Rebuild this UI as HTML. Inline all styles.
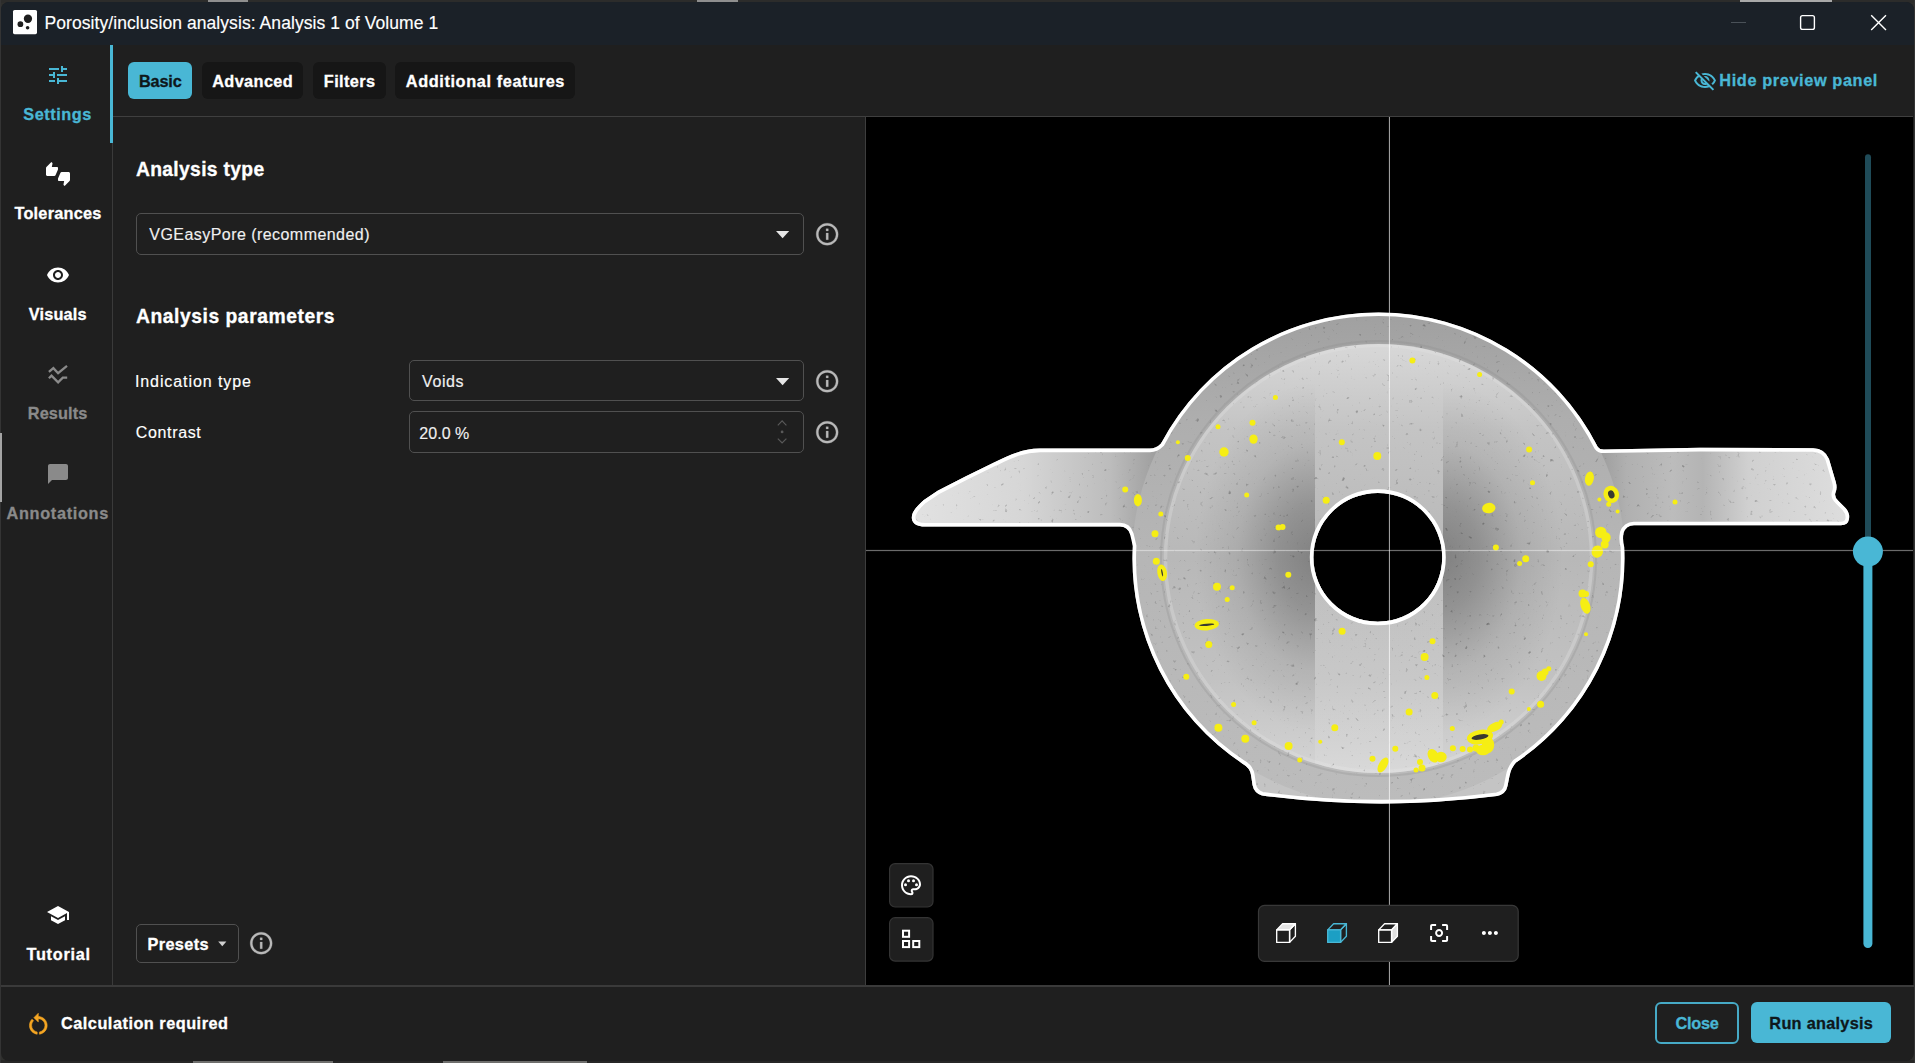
<!DOCTYPE html>
<html lang="en">
<head>
<meta charset="utf-8">
<title>Porosity/inclusion analysis</title>
<style>
*{box-sizing:border-box;margin:0;padding:0}
html,body{width:1915px;height:1063px;overflow:hidden;background:#2f2f2d;font-family:"Liberation Sans",sans-serif;color:#fff}
#win{position:absolute;left:1px;top:2px;width:1912.5px;height:1059px;background:#1f1f1f;border-radius:8px;overflow:hidden}
#pg{position:absolute;left:-1px;top:-2px;width:1915px;height:1063px}
.abs{position:absolute}
.t{position:absolute;white-space:nowrap;line-height:1;-webkit-text-stroke:0.15px currentColor}
.b{font-weight:bold;-webkit-text-stroke:0.3px currentColor}
.tab{position:absolute;top:62px;height:37px;border-radius:6px;background:#161616}
.field{position:absolute;border:1.4px solid #505050;border-radius:5px;background:#1f1f1f}
svg{position:absolute;overflow:visible}
</style>
</head>
<body>
<div class="abs" style="left:0;top:0;width:1915px;height:3px;background:#2c2c2b"></div>
<div class="abs" style="left:1740px;top:0;width:92px;height:1.7px;background:#a9a9a9"></div>
<div class="abs" style="left:208px;top:0;width:40px;height:1.6px;background:#8f8f8f"></div>
<div class="abs" style="left:697px;top:0;width:41px;height:1.6px;background:#8f8f8f"></div>
<div class="abs" style="left:0;top:1060px;width:1915px;height:3px;background:#272726"></div>
<div class="abs" style="left:193px;top:1060px;width:140px;height:3px;background:#6e6e6c"></div>
<div class="abs" style="left:443px;top:1060px;width:144px;height:3px;background:#6e6e6c"></div>
<div class="abs" style="left:1913.5px;top:0;width:1.5px;height:1063px;background:#343434"></div>
<div class="abs" style="left:0;top:0;width:1px;height:1063px;background:#343434"></div>
<div class="abs" style="left:0;top:433px;width:1.6px;height:69px;background:#a4a4a4;z-index:5"></div>

<div id="win"><div id="pg">

<div class="abs" style="left:0;top:0;width:1915px;height:44.5px;background:#1b2128"></div>
<div class="abs" style="left:111.6px;top:45px;width:1.4px;height:941px;background:#3a3a3a"></div>
<div class="abs" style="left:110px;top:45px;width:3px;height:98px;background:#49b7d5"></div>
<div class="abs" style="left:113px;top:115.7px;width:1800px;height:1.3px;background:#3f3f3f"></div>
<div class="abs" style="left:864.6px;top:116px;width:1.5px;height:870px;background:#3d3d3d"></div>
<div class="abs" style="left:0;top:985px;width:1915px;height:1.6px;background:#3a3a3a"></div>
<div class="tab" style="left:128px;width:64.2px;background:#49b7d5"></div>
<div class="tab" style="left:202px;width:101.3px"></div>
<div class="tab" style="left:313px;width:72.5px"></div>
<div class="tab" style="left:395px;width:179.8px"></div>
<div class="field" style="left:136px;top:213px;width:668px;height:41.5px"></div>
<div class="field" style="left:409px;top:360.3px;width:395px;height:41.2px"></div>
<div class="field" style="left:409px;top:411.2px;width:395px;height:41.4px"></div>
<div class="field" style="left:136.2px;top:924.3px;width:103px;height:38.3px"></div>
<div class="abs" style="left:1655px;top:1002px;width:84.3px;height:41.5px;border:2px solid #46aac6;border-radius:6px"></div>
<div class="abs" style="left:1751px;top:1002px;width:139.5px;height:41px;background:#49b7d5;border-radius:6px"></div>

<div class="t" id="ttl" style="left:44.56px;top:14.79px;font-size:17.5px;color:#ffffff;letter-spacing:0.071px">Porosity/inclusion analysis: Analysis 1 of Volume 1</div>
<div class="t b" id="s1" style="left:23.24px;top:106.00px;font-size:16.3px;color:#49b7d5;letter-spacing:0.553px">Settings</div>
<div class="t b" id="s2" style="left:14.47px;top:205.10px;font-size:16.3px;color:#ffffff;letter-spacing:0.226px">Tolerances</div>
<div class="t b" id="s3" style="left:28.80px;top:306.00px;font-size:16.3px;color:#ffffff;letter-spacing:0.158px">Visuals</div>
<div class="t b" id="s4" style="left:27.76px;top:405.10px;font-size:16.3px;color:#8a8a8a;letter-spacing:0.132px">Results</div>
<div class="t b" id="s5" style="left:6.53px;top:505.00px;font-size:16.3px;color:#8a8a8a;letter-spacing:0.681px">Annotations</div>
<div class="t b" id="s6" style="left:26.47px;top:946.20px;font-size:16.3px;color:#ffffff;letter-spacing:0.730px">Tutorial</div>
<div class="t b" id="t1" style="left:138.94px;top:73.30px;font-size:16.3px;color:#0e171b;letter-spacing:-0.171px">Basic</div>
<div class="t b" id="t2" style="left:212.20px;top:73.30px;font-size:16.3px;color:#ffffff;letter-spacing:0.389px">Advanced</div>
<div class="t b" id="t3" style="left:323.80px;top:73.30px;font-size:16.3px;color:#ffffff;letter-spacing:0.407px">Filters</div>
<div class="t b" id="t4" style="left:405.81px;top:73.30px;font-size:16.3px;color:#ffffff;letter-spacing:0.618px">Additional features</div>
<div class="t b" id="hp" style="left:1719.30px;top:72.20px;font-size:16.3px;color:#49b7d5;letter-spacing:0.622px">Hide preview panel</div>
<div class="t b" id="h1" style="left:135.98px;top:160.41px;font-size:19.3px;color:#ffffff;letter-spacing:0.324px">Analysis type</div>
<div class="t" id="f1" style="left:149.37px;top:226.76px;font-size:16px;color:#f0f0f0;letter-spacing:0.445px">VGEasyPore (recommended)</div>
<div class="t b" id="h2" style="left:135.98px;top:307.16px;font-size:19.3px;color:#ffffff;letter-spacing:0.546px">Analysis parameters</div>
<div class="t" id="l1" style="left:134.92px;top:374.46px;font-size:16px;color:#ffffff;letter-spacing:0.917px">Indication type</div>
<div class="t" id="f2" style="left:422.10px;top:374.46px;font-size:16px;color:#f0f0f0;letter-spacing:0.565px">Voids</div>
<div class="t" id="l2" style="left:135.78px;top:425.26px;font-size:16px;color:#ffffff;letter-spacing:0.651px">Contrast</div>
<div class="t" id="f3" style="left:419.24px;top:425.56px;font-size:16px;color:#f0f0f0;letter-spacing:0.058px">20.0 %</div>
<div class="t b" id="pr" style="left:147.52px;top:936.10px;font-size:16.3px;color:#ffffff;letter-spacing:0.355px">Presets</div>
<div class="t b" id="cr" style="left:61.03px;top:1015.10px;font-size:16.3px;color:#ffffff;letter-spacing:0.503px">Calculation required</div>
<div class="t b" id="cl" style="left:1675.59px;top:1015.20px;font-size:16.3px;color:#49b7d5;letter-spacing:-0.266px">Close</div>
<div class="t b" id="ra" style="left:1769.35px;top:1015.20px;font-size:16.3px;color:#0e171b;letter-spacing:0.278px">Run analysis</div>
<svg style="left:13px;top:10px" width="24" height="24" viewBox="0 0 24 24"><rect x="0" y="0" width="24" height="24.2" rx="1.6" fill="#fff"/><circle cx="14.95" cy="8.75" r="4.15" fill="#1e1e1e"/><circle cx="7.4" cy="14.2" r="2.85" fill="#1e1e1e"/><circle cx="14.6" cy="17.8" r="1.8" fill="#1e1e1e"/></svg>
<svg style="left:0;top:0" width="1915" height="45" viewBox="0 0 1915 45"><line x1="1731" y1="22.5" x2="1746" y2="22.5" stroke="#4a5158" stroke-width="1.2"/><rect x="1800.6" y="15.6" width="13.8" height="13.8" rx="2" fill="none" stroke="#fff" stroke-width="1.4"/><path d="M1871.2 15.2 L1886 30 M1886 15.2 L1871.2 30" stroke="#fff" stroke-width="1.4" fill="none"/></svg>
<svg style="left:46px;top:63px" width="24" height="24" viewBox="0 0 24 24"><path fill="#49b7d5" d="M3 17v2h6v-2H3zM3 5v2h10V5H3zm10 16v-2h8v-2h-8v-2h-2v6h2zM7 9v2H3v2h4v2h2V9H7zm14 4v-2H11v2h10zm-6-4h2V7h4V5h-4V3h-2v6z"/></svg>
<svg style="left:46px;top:162px" width="24" height="24" viewBox="0 0 24 24"><path fill="#ffffff" d="M12 6c0-.55-.45-1-1-1H5.82l.66-3.18.02-.23c0-.31-.13-.59-.33-.8L5.38 0 .44 4.94C.17 5.21 0 5.59 0 6v6.5c0 .83.67 1.5 1.5 1.5h6.75c.62 0 1.15-.38 1.38-.91l2.26-5.29c.07-.17.11-.36.11-.55V6zm10.5 4h-6.75c-.62 0-1.15.38-1.38.91l-2.26 5.29c-.07.17-.11.36-.11.55V18c0 .55.45 1 1 1h5.18l-.66 3.18-.02.24c0 .31.13.59.33.8l.79.78 4.94-4.94c.27-.27.44-.65.44-1.06v-6.5c0-.83-.67-1.5-1.5-1.5z"/></svg>
<svg style="left:46px;top:262.9px" width="24" height="24" viewBox="0 0 24 24"><path fill="#ffffff" d="M12 4.5C7 4.5 2.73 7.61 1 12c1.73 4.39 6 7.5 11 7.5s9.27-3.11 11-7.5c-1.73-4.39-6-7.5-11-7.5zM12 17c-2.76 0-5-2.24-5-5s2.24-5 5-5 5 2.24 5 5-2.24 5-5 5zm0-8c-1.66 0-3 1.34-3 3s1.34 3 3 3 3-1.34 3-3-1.34-3-3-3z"/></svg>
<svg style="left:0;top:0" width="120" height="400" viewBox="0 0 120 400"><path d="M48.9 371.8 L53.4 368.1 L58.1 373.2 L67 365.8 M48.9 378.2 L51.5 375.6 L58.1 382.3 L62.8 377.6 L67.2 377.6" fill="none" stroke="#8a8a8a" stroke-width="2.3"/></svg>
<svg style="left:46px;top:462px" width="24" height="24" viewBox="0 0 24 24"><path fill="#8a8a8a" d="M20 2H4c-1.1 0-2 .9-2 2v18l4-4h14c1.1 0 2-.9 2-2V4c0-1.1-.9-2-2-2z"/></svg>
<svg style="left:45.6px;top:902.9px" width="24" height="24" viewBox="0 0 24 24"><path fill="#ffffff" d="M5 13.18v4L12 21l7-3.82v-4L12 17l-7-3.82zM12 3L1 9l11 6 9-4.91V17h2V9L12 3z"/></svg>
<svg style="left:1692.8px;top:68.6px" width="24" height="24" viewBox="0 0 24 24"><path fill="#49b7d5" d="M12 6c3.79 0 7.17 2.13 8.82 5.5-.59 1.22-1.42 2.27-2.41 3.12l1.41 1.41c1.39-1.23 2.49-2.77 3.18-4.53C21.27 7.11 17 4 12 4c-1.27 0-2.49.2-3.64.57l1.65 1.65C10.66 6.09 11.32 6 12 6zm-1.07 1.14L13 9.21c.57.25 1.03.71 1.28 1.28l2.07 2.07c.08-.34.14-.7.14-1.07C16.5 9.01 14.48 7 12 7c-.37 0-.72.05-1.07.14zM2.01 3.87l2.68 2.68C3.06 7.83 1.77 9.53 1 11.5 2.73 15.89 7 19 12 19c1.52 0 2.98-.29 4.32-.82l3.42 3.42 1.41-1.41L3.42 2.45 2.01 3.87zm7.5 7.5l2.61 2.61c-.04.01-.08.02-.12.02-1.38 0-2.5-1.12-2.5-2.5 0-.05.01-.08.01-.13zm-3.4-3.4l1.75 1.75c-.23.55-.36 1.15-.36 1.78 0 2.48 2.02 4.5 4.5 4.5.63 0 1.23-.13 1.77-.36l.98.98c-.88.24-1.8.38-2.75.38-3.79 0-7.17-2.13-8.82-5.5.7-1.43 1.72-2.61 2.93-3.53z"/></svg>
<svg style="left:814.4px;top:221.4px" width="26.4" height="26.4" viewBox="0 0 24 24"><path fill="#b9b9b9" stroke="#b9b9b9" stroke-width="0.25" stroke-linejoin="round" d="M11 7h2v2h-2zm0 4h2v6h-2zm1-9C6.48 2 2 6.48 2 12s4.48 10 10 10 10-4.48 10-10S17.52 2 12 2zm0 18c-4.41 0-8-3.59-8-8s3.59-8 8-8 8 3.59 8 8-3.59 8-8 8z"/></svg>
<svg style="left:814.4px;top:368.40000000000003px" width="26.4" height="26.4" viewBox="0 0 24 24"><path fill="#b9b9b9" stroke="#b9b9b9" stroke-width="0.25" stroke-linejoin="round" d="M11 7h2v2h-2zm0 4h2v6h-2zm1-9C6.48 2 2 6.48 2 12s4.48 10 10 10 10-4.48 10-10S17.52 2 12 2zm0 18c-4.41 0-8-3.59-8-8s3.59-8 8-8 8 3.59 8 8-3.59 8-8 8z"/></svg>
<svg style="left:814.4px;top:419.2px" width="26.4" height="26.4" viewBox="0 0 24 24"><path fill="#b9b9b9" stroke="#b9b9b9" stroke-width="0.25" stroke-linejoin="round" d="M11 7h2v2h-2zm0 4h2v6h-2zm1-9C6.48 2 2 6.48 2 12s4.48 10 10 10 10-4.48 10-10S17.52 2 12 2zm0 18c-4.41 0-8-3.59-8-8s3.59-8 8-8 8 3.59 8 8-3.59 8-8 8z"/></svg>
<svg style="left:248.3px;top:930.3px" width="26.4" height="26.4" viewBox="0 0 24 24"><path fill="#b9b9b9" stroke="#b9b9b9" stroke-width="0.25" stroke-linejoin="round" d="M11 7h2v2h-2zm0 4h2v6h-2zm1-9C6.48 2 2 6.48 2 12s4.48 10 10 10 10-4.48 10-10S17.52 2 12 2zm0 18c-4.41 0-8-3.59-8-8s3.59-8 8-8 8 3.59 8 8-3.59 8-8 8z"/></svg>
<svg style="left:24.9px;top:1010.6px" width="26.6" height="26.6" viewBox="0 0 24 24"><path fill="#f5a623" stroke="#f5a623" stroke-width="0.5" stroke-linejoin="round" d="M12 5V2L8 6l4 4V7c3.31 0 6 2.69 6 6 0 2.97-2.17 5.43-5 5.91v2.02c3.95-.49 7-3.85 7-7.93 0-4.42-3.58-8-8-8zm-6 8c0-1.65.67-3.15 1.76-4.24L6.34 7.34C4.9 8.79 4 10.79 4 13c0 4.08 3.05 7.44 7 7.93v-2.02c-2.83-.48-5-2.94-5-5.91z"/></svg>
<svg style="left:0;top:0" width="900" height="1000" viewBox="0 0 900 1000"><path d="M776 230.9 L789.2 230.9 L782.6 238.2 Z" fill="#e6e6e6"/><path d="M776 377.9 L789.2 377.9 L782.6 385.2 Z" fill="#e6e6e6"/><path d="M218.2 941.4 L226.4 941.4 L222.3 946.2 Z" fill="#d0d0d0"/><path d="M777.8 425.3 L782.1 420.9 L786.4 425.3 M777.8 438.6 L782.1 443 L786.4 438.6" fill="none" stroke="#595959" stroke-width="1.2"/><circle cx="782.1" cy="431.9" r="1.4" fill="#595959"/></svg>

<svg style="left:0;top:0" width="1915" height="1063" viewBox="0 0 1915 1063">
<defs>
<clipPath id="pv"><rect x="866" y="117" width="1047" height="868"/></clipPath>
<clipPath id="ic"><circle cx="1378.5" cy="558.5" r="214.5"/></clipPath>
<clipPath id="pc" clip-rule="evenodd"><path d="M1378.5 312.5 A246 246 0 0 1 1597.8 447 Q1599.8 449.6 1604 449.5 L1700 447.8 L1813 448.2 Q1825 448.6 1829 459 L1835.7 481.8 Q1837.5 488 1835.5 492.5 Q1834 496.5 1838 500.5 L1845.5 508 Q1850 513 1849 519 Q1848 525.2 1841 525.3 L1634 525.3 Q1626 525.6 1623.5 533 Q1622.3 540 1624.2 547 A246 246 0 0 1 1516 762.5 Q1511 768 1509.5 776 L1507.5 786 Q1506 794 1497 796 Q1380 811 1262 795.5 Q1254 793 1252.5 785 L1251 775 Q1250 768 1243 764 A246 246 0 0 1 1132.8 546 Q1131.5 540 1130 534 Q1127.5 526.4 1120 526.4 L926 526.6 C914.5 526.6 911.8 522 911.8 517.5 C911.8 512 916 507 923.5 500.2 L937.6 490.8 L965.9 476.2 L994 462.6 C1010 455 1022 448.8 1040 448.6 L1150 448.6 Q1156 448.6 1161 443.5 A246 246 0 0 1 1378.5 312.5 Z M1313.3999999999999 557.3 a64.4 64.4 0 1 0 128.8 0 a64.4 64.4 0 1 0 -128.8 0 Z" clip-rule="evenodd"/></clipPath>
<radialGradient id="gl" gradientUnits="userSpaceOnUse" cx="0" cy="0" r="1" gradientTransform="translate(1315 557) scale(120 175)">
<stop offset="0" stop-color="#000" stop-opacity=".30"/><stop offset=".3" stop-color="#000" stop-opacity=".22"/><stop offset=".65" stop-color="#000" stop-opacity=".07"/><stop offset="1" stop-color="#000" stop-opacity="0"/></radialGradient>
<radialGradient id="gr" gradientUnits="userSpaceOnUse" cx="0" cy="0" r="1" gradientTransform="translate(1443 557) scale(120 175)">
<stop offset="0" stop-color="#000" stop-opacity=".30"/><stop offset=".3" stop-color="#000" stop-opacity=".22"/><stop offset=".65" stop-color="#000" stop-opacity=".07"/><stop offset="1" stop-color="#000" stop-opacity="0"/></radialGradient>
<linearGradient id="gd" gradientUnits="userSpaceOnUse" x1="0" y1="312" x2="0" y2="805">
<stop offset="0" stop-color="#a0a0a0"/><stop offset=".22" stop-color="#aeaeae"/><stop offset=".5" stop-color="#b6b6b6"/><stop offset="1" stop-color="#bcbcbc"/></linearGradient>
<linearGradient id="gi" gradientUnits="userSpaceOnUse" x1="0" y1="344" x2="0" y2="773">
<stop offset="0" stop-color="#d8d8d8"/><stop offset=".2" stop-color="#c4c4c4"/><stop offset=".5" stop-color="#b8b8b8"/><stop offset=".78" stop-color="#c2c2c2"/><stop offset="1" stop-color="#d4d4d4"/></linearGradient>
<linearGradient id="gm" gradientUnits="userSpaceOnUse" x1="0" y1="590" x2="0" y2="780">
<stop offset="0" stop-color="#fff" stop-opacity=".08"/><stop offset="1" stop-color="#fff" stop-opacity=".12"/></linearGradient>
<linearGradient id="ga1" gradientUnits="userSpaceOnUse" x1="912" y1="0" x2="1160" y2="0">
<stop offset="0" stop-color="#e2e2e2"/><stop offset=".45" stop-color="#d6d6d6"/><stop offset=".8" stop-color="#bcbcbc"/><stop offset="1" stop-color="#9c9c9c"/></linearGradient>
<linearGradient id="ga2" gradientUnits="userSpaceOnUse" x1="1596" y1="0" x2="1850" y2="0">
<stop offset="0" stop-color="#9a9a9a"/><stop offset=".12" stop-color="#b0b0b0"/><stop offset=".3" stop-color="#bcbcbc"/><stop offset=".42" stop-color="#b4b4b4"/><stop offset=".6" stop-color="#d0d0d0"/><stop offset="1" stop-color="#dedede"/></linearGradient>
<radialGradient id="gh" gradientUnits="userSpaceOnUse" cx="1378" cy="530" r="200">
<stop offset="0" stop-color="#000" stop-opacity=".17"/><stop offset=".55" stop-color="#000" stop-opacity=".10"/><stop offset="1" stop-color="#000" stop-opacity="0"/></radialGradient>
<linearGradient id="gv" gradientUnits="userSpaceOnUse" x1="0" y1="312" x2="0" y2="805">
<stop offset="0" stop-color="#000" stop-opacity=".05"/><stop offset=".5" stop-color="#000" stop-opacity="0"/><stop offset=".55" stop-color="#fff" stop-opacity="0"/><stop offset="1" stop-color="#fff" stop-opacity=".28"/></linearGradient>
<linearGradient id="gb" gradientUnits="userSpaceOnUse" x1="0" y1="345" x2="0" y2="495">
<stop offset="0" stop-color="#000" stop-opacity="0"/><stop offset="1" stop-color="#000" stop-opacity=".11"/></linearGradient>
<filter id="nz" x="0" y="0" width="100%" height="100%"><feTurbulence type="fractalNoise" baseFrequency=".22" numOctaves="2" seed="7"/><feColorMatrix type="matrix" values="0 0 0 0 0  0 0 0 0 0  0 0 0 0 0  4 0 0 0 -2.78"/></filter>
</defs>
<rect x="866" y="117" width="1047" height="868" fill="#000"/>
<g clip-path="url(#pv)">
 <g clip-path="url(#pc)">
  <rect x="900" y="438" width="262" height="97" fill="url(#ga1)"/>
  <rect x="1594" y="438" width="262" height="97" fill="url(#ga2)"/>
  <path d="M1240 760 H1520 V812 H1240 Z" fill="#c4c4c4"/>
  <circle cx="1378.5" cy="558.5" r="246.5" fill="url(#gd)"/>
  <circle cx="1378.5" cy="558.5" r="217.5" fill="none" stroke="#8c8c8c" stroke-width="2" opacity=".28"/>
  <circle cx="1378.5" cy="558.5" r="214.5" fill="url(#gi)"/>
  <circle cx="1378.5" cy="558.5" r="213" fill="none" stroke="#e6e6e6" stroke-width="3.5" opacity=".3"/>
  <rect x="1315" y="557" width="128" height="223" fill="url(#gm)" clip-path="url(#ic)"/>
  <rect x="1190" y="330" width="125" height="460" fill="url(#gl)"/>
  <rect x="1443" y="330" width="125" height="460" fill="url(#gr)"/>
  <rect x="900" y="300" width="960" height="520" filter="url(#nz)" opacity=".32"/>
  <path d="M1378.5 312.5 A246 246 0 0 1 1597.8 447 Q1599.8 449.6 1604 449.5 L1700 447.8 L1813 448.2 Q1825 448.6 1829 459 L1835.7 481.8 Q1837.5 488 1835.5 492.5 Q1834 496.5 1838 500.5 L1845.5 508 Q1850 513 1849 519 Q1848 525.2 1841 525.3 L1634 525.3 Q1626 525.6 1623.5 533 Q1622.3 540 1624.2 547 A246 246 0 0 1 1516 762.5 Q1511 768 1509.5 776 L1507.5 786 Q1506 794 1497 796 Q1380 811 1262 795.5 Q1254 793 1252.5 785 L1251 775 Q1250 768 1243 764 A246 246 0 0 1 1132.8 546 Q1131.5 540 1130 534 Q1127.5 526.4 1120 526.4 L926 526.6 C914.5 526.6 911.8 522 911.8 517.5 C911.8 512 916 507 923.5 500.2 L937.6 490.8 L965.9 476.2 L994 462.6 C1010 455 1022 448.8 1040 448.6 L1150 448.6 Q1156 448.6 1161 443.5 A246 246 0 0 1 1378.5 312.5 Z M1313.3999999999999 557.3 a64.4 64.4 0 1 0 128.8 0 a64.4 64.4 0 1 0 -128.8 0 Z" fill="none" stroke="#fff" stroke-width="7.2" fill-rule="evenodd"/>
 </g>
 <g fill="#f6ee14"><circle cx="1275.4" cy="397.5" r="2.5"/><circle cx="1252.5" cy="422.8" r="3"/><circle cx="1218" cy="426.7" r="2.5"/><circle cx="1177.9" cy="442.3" r="2"/><circle cx="1187.7" cy="458" r="3"/><circle cx="1341.8" cy="442.3" r="3"/><circle cx="1377.3" cy="456" r="4"/><circle cx="1125.2" cy="489.4" r="3"/><circle cx="1246.7" cy="495" r="2.5"/><circle cx="1326.2" cy="500.2" r="3.5"/><circle cx="1160.8" cy="513.9" r="2.5"/><circle cx="1155" cy="533.7" r="3.5"/><circle cx="1278.5" cy="527.5" r="3"/><circle cx="1282.5" cy="527" r="3"/><circle cx="1156.3" cy="561.3" r="3.5"/><circle cx="1288.3" cy="574.8" r="3"/><circle cx="1412.4" cy="360.6" r="3"/><circle cx="1479.6" cy="374.6" r="2.5"/><circle cx="1529.1" cy="449.4" r="3"/><circle cx="1532.5" cy="482.8" r="2.5"/><circle cx="1599.4" cy="499.4" r="2"/><circle cx="1608.7" cy="504.2" r="2.5"/><circle cx="1617.6" cy="511.5" r="2"/><circle cx="1675" cy="502" r="2.5"/><circle cx="1604.7" cy="544.5" r="4"/><circle cx="1495.9" cy="547.6" r="3"/><circle cx="1525.7" cy="558.7" r="3.5"/><circle cx="1519.6" cy="563.4" r="2.5"/><circle cx="1590.7" cy="564.2" r="3"/><circle cx="1217" cy="586.8" r="4"/><circle cx="1232.2" cy="587.7" r="2.5"/><circle cx="1227.2" cy="599.6" r="2.5"/><circle cx="1208.8" cy="644.4" r="3.5"/><circle cx="1186.3" cy="676.8" r="3"/><circle cx="1342.1" cy="631.2" r="3.5"/><circle cx="1432.5" cy="641.2" r="3"/><circle cx="1424.6" cy="657" r="4"/><circle cx="1426.9" cy="677.4" r="2.5"/><circle cx="1434.8" cy="695.6" r="3.5"/><circle cx="1409.1" cy="711.9" r="3.5"/><circle cx="1233.6" cy="704.6" r="2.5"/><circle cx="1218.4" cy="727.7" r="4"/><circle cx="1254.1" cy="722.7" r="2.5"/><circle cx="1245.3" cy="738.8" r="4"/><circle cx="1288.6" cy="746.1" r="4"/><circle cx="1299.7" cy="759.9" r="2.5"/><circle cx="1320.2" cy="741.8" r="2"/><circle cx="1334.8" cy="727.7" r="3.5"/><circle cx="1372.5" cy="758.7" r="3"/><circle cx="1395.3" cy="748.8" r="3"/><circle cx="1452.3" cy="728.6" r="2.5"/><circle cx="1452.9" cy="748.2" r="3"/><circle cx="1462.6" cy="749" r="3"/><circle cx="1501.2" cy="721.9" r="2.5"/><circle cx="1511.7" cy="691.5" r="3"/><circle cx="1528.9" cy="709" r="2"/><circle cx="1540.6" cy="704.3" r="3.5"/><circle cx="1541.5" cy="676" r="5"/><circle cx="1545" cy="672" r="3.5"/><circle cx="1548.8" cy="668.7" r="2.5"/><circle cx="1586" cy="634.2" r="2"/><circle cx="1582.5" cy="593.5" r="4"/><circle cx="1586" cy="594" r="3"/><circle cx="1420" cy="762" r="3"/><circle cx="1422" cy="768" r="3.5"/><circle cx="1416" cy="770" r="2.5"/><circle cx="1470" cy="749.5" r="3"/><circle cx="1476" cy="748" r="3.5"/></g>
 <g fill="#f6ee14"><ellipse cx="1253.5" cy="439.1" rx="4.2" ry="4.7" transform="rotate(0 1253.5 439.1)"/><ellipse cx="1224" cy="452" rx="4.7" ry="4.7" transform="rotate(0 1224 452)"/><ellipse cx="1137.9" cy="500.2" rx="4.0" ry="6.2" transform="rotate(0 1137.9 500.2)"/><ellipse cx="1162.1" cy="572.7" rx="4.8" ry="8.4" transform="rotate(-10 1162.1 572.7)"/><ellipse cx="1488.8" cy="508.1" rx="6.7" ry="5.2" transform="rotate(-10 1488.8 508.1)"/><ellipse cx="1589.4" cy="478.6" rx="4.4" ry="7.2" transform="rotate(10 1589.4 478.6)"/><ellipse cx="1611.3" cy="494.4" rx="7.7" ry="8.7" transform="rotate(-20 1611.3 494.4)"/><ellipse cx="1600.8" cy="532.4" rx="5.7" ry="5.7" transform="rotate(0 1600.8 532.4)"/><ellipse cx="1606" cy="537.5" rx="4.7" ry="5.2" transform="rotate(0 1606 537.5)"/><ellipse cx="1597.3" cy="551.6" rx="5.7" ry="6.2" transform="rotate(20 1597.3 551.6)"/><ellipse cx="1206.7" cy="624.8" rx="12.2" ry="5.7" transform="rotate(-5 1206.7 624.8)"/><ellipse cx="1383" cy="765" rx="4.2" ry="8.299999999999999" transform="rotate(30 1383 765)"/><ellipse cx="1433.3" cy="755.8" rx="5.2" ry="7.2" transform="rotate(-30 1433.3 755.8)"/><ellipse cx="1441" cy="757" rx="5.7" ry="5.2" transform="rotate(0 1441 757)"/><ellipse cx="1585.4" cy="605.8" rx="4.7" ry="8.2" transform="rotate(-20 1585.4 605.8)"/><ellipse cx="1494.7" cy="727" rx="8.2" ry="4.2" transform="rotate(-25 1494.7 727)"/><ellipse cx="1480" cy="737" rx="13.2" ry="7.2" transform="rotate(-10 1480 737)"/><ellipse cx="1488" cy="745" rx="6.2" ry="8.2" transform="rotate(0 1488 745)"/><ellipse cx="1483" cy="750" rx="7.2" ry="5.2" transform="rotate(0 1483 750)"/></g><g fill="#3a3a30"><ellipse cx="1162.1" cy="572.7" rx="0.7" ry="3.8000000000000003" transform="rotate(-10 1162.1 572.7)"/><ellipse cx="1611.3" cy="494.4" rx="3.1" ry="4.1" transform="rotate(-20 1611.3 494.4)"/><ellipse cx="1206.7" cy="624.8" rx="7.6" ry="1.1" transform="rotate(-5 1206.7 624.8)"/><ellipse cx="1480" cy="737" rx="8.6" ry="2.6" transform="rotate(-10 1480 737)"/></g>
 <rect x="1388.9" y="117" width="1.1" height="868" fill="#fff" opacity=".62"/>
 <rect x="866" y="549.9" width="1047" height="1.2" fill="#fff" opacity=".42"/>
 <rect x="1865" y="154.3" width="6" height="400" rx="3" fill="#1f4b58"/>
 <rect x="1863.4" y="552" width="9" height="396" rx="4.5" fill="#49b7d5"/>
 <circle cx="1867.9" cy="551.6" r="15" fill="#49b7d5"/>
 <rect x="1258.5" y="905.4" width="259.7" height="56" rx="6" fill="#1f1f1f" stroke="#383838" stroke-width="1.2"/>
 <g stroke="#fff" stroke-width="1.35" stroke-linejoin="round"><path d="M1276.7 929.9 L1282.6 923.7 H1295.4 L1289.6 929.9 Z" fill="#e4e4e4"/><path d="M1289.6 929.9 L1295.4 923.7 V936.2 L1289.6 942.4 Z" fill="none"/><path d="M1276.7 929.9 H1289.6 V942.4 H1276.7 Z" fill="none"/></g><g stroke="#49b7d5" stroke-width="1.35" stroke-linejoin="round"><path d="M1327.7 929.9 L1333.6 923.7 H1346.4 L1340.6 929.9 Z" fill="none"/><path d="M1340.6 929.9 L1346.4 923.7 V936.2 L1340.6 942.4 Z" fill="none"/><path d="M1327.7 929.9 H1340.6 V942.4 H1327.7 Z" fill="#1c9fc4"/></g><g stroke="#fff" stroke-width="1.35" stroke-linejoin="round"><path d="M1378.7 929.9 L1384.6 923.7 H1397.4 L1391.6 929.9 Z" fill="none"/><path d="M1391.6 929.9 L1397.4 923.7 V936.2 L1391.6 942.4 Z" fill="#e0e0e0"/><path d="M1378.7 929.9 H1391.6 V942.4 H1378.7 Z" fill="none"/></g>
 <g transform="translate(1427.1 921)"><path d="M5 15H3v4c0 1.1.9 2 2 2h4v-2H5v-4zM5 5h4V3H5c-1.1 0-2 .9-2 2v4h2V5zm14-2h-4v2h4v4h2V5c0-1.1-.9-2-2-2zm0 16h-4v2h4c1.1 0 2-.9 2-2v-4h-2v4zM12 8c-2.21 0-4 1.79-4 4s1.79 4 4 4 4-1.79 4-4-1.79-4-4-4zm0 6c-1.1 0-2-.9-2-2s.9-2 2-2 2 .9 2 2-.9 2-2 2z" fill="#fff"/></g>
 <g transform="translate(1477.9 921)"><path d="M6 10c-1.1 0-2 .9-2 2s.9 2 2 2 2-.9 2-2-.9-2-2-2zm12 0c-1.1 0-2 .9-2 2s.9 2 2 2 2-.9 2-2-.9-2-2-2zm-6 0c-1.1 0-2 .9-2 2s.9 2 2 2 2-.9 2-2-.9-2-2-2z" fill="#fff"/></g>
 <rect x="889.6" y="863.6" width="43.4" height="43.4" rx="5.5" fill="#1f1f1f" stroke="#343434" stroke-width="1.2"/>
 <rect x="889.6" y="917.7" width="43.4" height="43.4" rx="5.5" fill="#1f1f1f" stroke="#343434" stroke-width="1.2"/>
 <g transform="translate(899 873.3)" fill="#fff"><path d="M12 22C6.49 22 2 17.51 2 12S6.49 2 12 2s10 4.04 10 9c0 3.31-2.69 6-6 6h-1.77c-.28 0-.5.22-.5.5 0 .12.05.23.13.33.41.47.64 1.06.64 1.67A2.5 2.5 0 0 1 12 22zm0-18c-4.41 0-8 3.59-8 8s3.59 8 8 8c.28 0 .5-.22.5-.5a.54.54 0 0 0-.14-.35c-.41-.46-.63-1.05-.63-1.65a2.5 2.5 0 0 1 2.5-2.5H16c2.21 0 4-1.79 4-4 0-3.860-3.590-7-8-7z"/><circle cx="6.5" cy="11.5" r="1.5"/><circle cx="9.5" cy="7.5" r="1.5"/><circle cx="14.5" cy="7.5" r="1.5"/><circle cx="17.5" cy="11.5" r="1.5"/></g>
 <g fill="none" stroke="#fff" stroke-width="2"><rect x="903" y="930.7" width="6.1" height="6.1"/><rect x="903" y="941" width="6.1" height="6.1"/><rect x="913.2" y="941" width="6.1" height="6.1"/></g>
</g>
</svg>

</div></div>
</body>
</html>
